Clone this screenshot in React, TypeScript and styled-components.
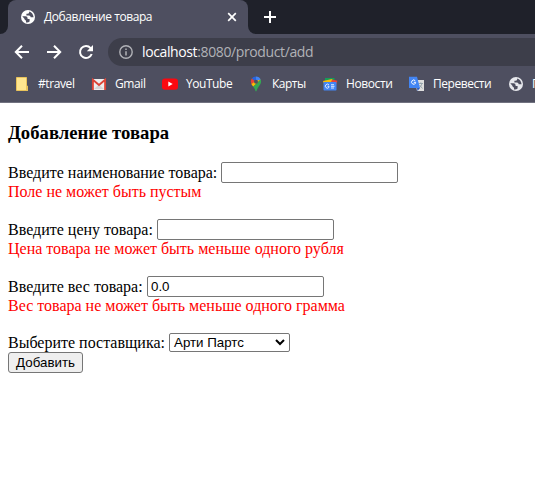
import React from 'react';
import styled, { createGlobalStyle } from 'styled-components';

const GlobalStyle = createGlobalStyle`
  *, *::before, *::after { box-sizing: border-box; }
  html, body { margin: 0; background: #fff; overflow: hidden; }
`;

const Window = styled.div`
  width: 535px;
  height: 487px;
  overflow: hidden;
  background: #fff;
`;

const Chrome = styled.header`
  background: #4e4f60;
  font-family: 'Open Sans', 'Noto Sans', sans-serif;
  color: #fff;
  border-bottom: 1px solid #717280;
  height: 103px;
`;

const TabStrip = styled.div`
  display: flex;
  height: 34px;
  background: #1f212a;
`;

const StripEdge = styled.div<{ $side: 'left' | 'right' }>`
  width: 8px;
  background: #4e4f60;
  &::before {
    content: '';
    display: block;
    height: 34px;
    background: #1f212a;
    border-radius: ${(p) => (p.$side === 'left' ? '0 0 8px 0' : '0 0 0 8px')};
  }
`;

const Tab = styled.div`
  display: flex;
  align-items: center;
  width: 240px;
  padding: 0 10px 0 12px;
  background: #4e4f60;
  border-radius: 8px 8px 0 0;
`;

const Label = styled.span<{ $size?: number; $track?: number }>`
  font-size: ${(p) => p.$size ?? 12}px;
  letter-spacing: ${(p) => p.$track ?? 0}px;
  line-height: 16px;
  white-space: nowrap;
`;

const TabTitle = styled(Label)`
  flex: 1;
  margin-left: 8px;
`;

const NewTab = styled.div`
  display: flex;
  align-items: center;
  margin-left: 7px;
`;

const Toolbar = styled.div`
  display: flex;
  align-items: center;
  height: 36px;
  padding-left: 14px;
`;

const NavIcons = styled.div`
  display: flex;
  gap: 16px;
`;

const AddressBar = styled.div`
  display: flex;
  align-items: center;
  flex: 1;
  height: 28px;
  margin-left: 14px;
  padding-left: 11px;
  background: #3d3e4a;
  border-radius: 14px 0 0 14px;
`;

const Url = styled(Label)`
  margin-left: 9px;
  color: #b1b2b7;
  b { font-weight: 400; color: #fff; }
`;

const Bookmarks = styled.nav`
  display: flex;
  height: 32px;
  padding: 0 0 4px 14px;
  overflow: hidden;
`;

const Bookmark = styled.div<{ $width: number }>`
  display: flex;
  align-items: center;
  flex: 0 0 ${(p) => p.$width}px;
  gap: 8px;
  svg { flex: none; }
`;

const Page = styled.main`
  padding: 20px 8px 0;
  font: 16px/18px 'Liberation Serif', serif;
  color: #000;
`;

const Heading = styled.h3`
  margin: 0 0 19px;
  font-size: 18.72px;
  line-height: 20px;
`;

const Field = styled.div`
  height: 57px;
`;

const Row = styled.label<{ $labelWidth: number; $height?: number }>`
  display: grid;
  grid-template-columns: ${(p) => p.$labelWidth}px max-content;
  align-items: center;
  height: ${(p) => p.$height ?? 21}px;
  white-space: nowrap;
`;

const Input = styled.input`
  width: 177px;
  height: 21px;
  margin: 0;
  padding: 1px 3px;
  border: 1px solid #767676;
  border-radius: 2px;
  background: #fff;
  font: 13.333px 'Liberation Sans', sans-serif;
  color: #000;
  outline: none;
`;

const ErrorText = styled.div`
  color: #ff0000;
  line-height: 18px;
`;

const Select = styled.div`
  display: flex;
  align-items: center;
  justify-content: space-between;
  width: 121px;
  height: 19px;
  padding: 0 4px;
  border: 1px solid #767676;
  border-radius: 2px;
  font: 13.333px/17px 'Liberation Sans', sans-serif;
`;

const Button = styled.button`
  display: block;
  width: 75px;
  height: 21px;
  margin: 0;
  padding: 0;
  border: 1px solid #767676;
  border-radius: 3px;
  background: #efefef;
  font: 13.333px/17px 'Liberation Sans', sans-serif;
  color: #000;
`;

const Globe = ({ fill = '#fff' }: { fill?: string }) => (
  <svg width="16" height="16" viewBox="0 0 16 16">
    <circle cx="8" cy="8" r="7" fill={fill} />
    <path
      d="M2.3 7.2H5.6Q7.6 7.3 7.6 9.2V10H9.6V12.6Q8 13.9 6 13.4V11.6Q4.6 11.3 4.4 9.8ZM9.2 2.4V3.2Q9 4.8 7.2 4.8H6.4V6.4H9Q10.6 6.5 10.7 8.3H13.6Q13.3 6 12.2 4.6Q11 3 9.2 2.4Z"
      fill="#4e4f60"
    />
  </svg>
);

const Back = () => (
  <svg width="16" height="16" viewBox="0 0 16 16" fill="none" stroke="#fff" strokeWidth="2">
    <path d="M15 8H2.5M8 1.8 1.8 8 8 14.2" />
  </svg>
);

const Forward = () => (
  <svg width="16" height="16" viewBox="0 0 16 16" fill="none" stroke="#fff" strokeWidth="2">
    <path d="M1 8H13.5M8 1.8 14.2 8 8 14.2" />
  </svg>
);

const Reload = () => (
  <svg width="16" height="16" viewBox="0 0 16 16">
    <path d="M13.7 10A6 6 0 1 1 12.6 4.1" fill="none" stroke="#fff" strokeWidth="2" />
    <path d="M15 1V7.2H8.8Z" fill="#fff" />
  </svg>
);

const Info = () => (
  <svg width="14" height="14" viewBox="0 0 14 14">
    <circle cx="7" cy="7" r="6.2" fill="none" stroke="#b1b2b7" strokeWidth="1.4" />
    <path d="M7 6.2V10.5M7 3.4V5" stroke="#b1b2b7" strokeWidth="1.5" />
  </svg>
);

const Note = () => (
  <svg width="16" height="16" viewBox="0 0 16 16">
    <path d="M2.5 1.5H12.5V10H13.5V14.5H2.5Z" fill="#ffe68f" stroke="#e9c35b" />
    <path d="M12 10H14V15H12Z" fill="#e9c35b" />
  </svg>
);

const Gmail = () => (
  <svg width="16" height="16" viewBox="0 0 16 16">
    <path d="M1 3H15V14H1Z" fill="#eee" />
    <path d="M3 13 8 8.5 13 13Z" fill="#d5d5d5" />
    <path d="M1.9 14V3.8L8 9 14.1 3.8V14" fill="none" stroke="#dc4437" strokeWidth="1.9" />
  </svg>
);

const YouTube = () => (
  <svg width="16" height="16" viewBox="0 0 16 16">
    <rect x="0" y="2.5" width="16" height="11.2" rx="3" fill="#fb0910" />
    <path d="M6.3 5.6 10.7 8.1 6.3 10.6Z" fill="#fff" />
  </svg>
);

const Maps = () => (
  <svg width="16" height="16" viewBox="0 0 16 16">
    <path d="M8 .5A5.3 5.3 0 0 0 3.7 2.6L8 6Z" fill="#2864dc" />
    <path d="M3.7 2.6A5.3 5.3 0 0 0 3.3 8L8 6Z" fill="#ea4335" />
    <path d="M8 .5A5.3 5.3 0 0 1 12.7 3.5L8 6Z" fill="#4285f4" />
    <path d="M3.3 8 5.2 10.7 12.7 3.5 8 5Z" fill="#fbbc04" />
    <path d="M12.7 3.5C14.5 8.4 9.5 10.2 8.5 15.3H7.5C7.2 13.2 6.2 12 5.2 10.7Z" fill="#34a853" />
    <circle cx="8" cy="5.8" r="2" fill="#4e4f60" />
  </svg>
);

const News = () => (
  <svg width="16" height="16" viewBox="0 0 16 16">
    <path d="M3 2H12.5V7H3Z" fill="#159d58" />
    <path d="M1 5 10 3 13 8H2Z" fill="#fbbc04" />
    <path d="M10 3.6 15.4 4.8 14 9H8Z" fill="#ea4335" />
    <rect x="1.5" y="6" width="13" height="8.5" rx=".7" fill="#4285f4" />
    <path d="M7 9A2 2 0 1 0 7 11.3V10.3H5.5M9 8.7H12M9 10.3H12.5M9 12H12" stroke="#dce8ff" fill="none" />
  </svg>
);

const Translate = () => (
  <svg width="16" height="16" viewBox="0 0 16 16">
    <path d="M6 4H15V15H8Z" fill="#dedede" />
    <path d="M9.5 7.5H14M11.8 6.3V7.5M13 7.5Q12 11 10 12M10.5 9 13.5 12.5" fill="none" stroke="#8a9ba4" strokeWidth=".8" />
    <path d="M0 .8H8L11 12H0Z" fill="#4385f3" />
    <path d="M8 12H11L8.5 15Z" fill="#2c58bd" />
    <path d="M6.3 4.8A2.1 2.1 0 1 0 6.6 7V6.3H4.8" fill="none" stroke="#fff" />
  </svg>
);

const links = [
  { name: '#travel', icon: <Note />, width: 77, track: -0.4 },
  { name: 'Gmail', icon: <Gmail />, width: 71, track: -0.4 },
  { name: 'YouTube', icon: <YouTube />, width: 86, track: -0.45 },
  { name: 'Карты', icon: <Maps />, width: 74, track: -0.5 },
  { name: 'Новости', icon: <News />, width: 87, track: -0.4 },
  { name: 'Перевести', icon: <Translate />, width: 99, track: -0.45 },
  { name: 'П', icon: <Globe fill="#e7e8ed" />, width: 90, track: 0 },
];

const fields = [
  { label: 'Введите наименование товара:', width: 213, value: '', error: 'Поле не может быть пустым' },
  { label: 'Введите цену товара:', width: 149, value: '', error: 'Цена товара не может быть меньше одного рубля' },
  { label: 'Введите вес товара:', width: 139, value: '0.0', error: 'Вес товара не может быть меньше одного грамма' },
];

export default function App() {
  return (
    <Window>
      <GlobalStyle />
      <Chrome>
        <TabStrip>
          <StripEdge $side="left" />
          <Tab>
            <Globe />
            <TabTitle $track={-0.42}>Добавление товара</TabTitle>
            <svg width="12" height="12" viewBox="0 0 12 12" stroke="#fff" strokeWidth="1.7">
              <path d="M2.2 2.2 9.8 9.8M9.8 2.2 2.2 9.8" />
            </svg>
          </Tab>
          <StripEdge $side="right" />
          <NewTab>
            <svg width="14" height="14" viewBox="0 0 14 14" stroke="#fff" strokeWidth="2">
              <path d="M7 1V13M1 7H13" />
            </svg>
          </NewTab>
        </TabStrip>
        <Toolbar>
          <NavIcons>
            <Back />
            <Forward />
            <Reload />
          </NavIcons>
          <AddressBar>
            <Info />
            <Url $size={14} $track={-0.38}><b>localhost</b>:8080/product/add</Url>
          </AddressBar>
        </Toolbar>
        <Bookmarks>
          {links.map((l) => (
            <Bookmark key={l.name} $width={l.width}>
              {l.icon}
              <Label $track={l.track}>{l.name}</Label>
            </Bookmark>
          ))}
        </Bookmarks>
      </Chrome>
      <Page>
        <Heading>Добавление товара</Heading>
        {fields.map((f) => (
          <Field key={f.label}>
            <Row $labelWidth={f.width}>
              {f.label}
              <Input defaultValue={f.value} />
            </Row>
            <ErrorText>{f.error}</ErrorText>
          </Field>
        ))}
        <Row as="div" $labelWidth={161} $height={19}>
          Выберите поставщика:
          <Select>
            Арти Партс
            <svg width="10" height="7" viewBox="0 0 10 7" fill="none" stroke="#000" strokeWidth="2">
              <path d="M1 1 5 5 9 1" />
            </svg>
          </Select>
        </Row>
        <Button>Добавить</Button>
      </Page>
    </Window>
  );
}
